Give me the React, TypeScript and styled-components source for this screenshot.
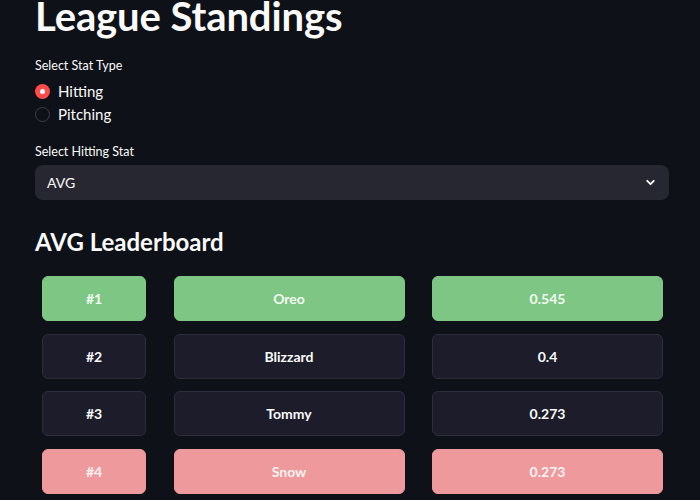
import React from "react"
import styled, { createGlobalStyle } from "styled-components"

const GlobalStyle = createGlobalStyle`
  html, body {
    margin: 0;
    padding: 0;
    background: #0e1117;
    color: #fafafa;
    font-family: Lato, "Noto Sans", sans-serif;
  }
`

const Page = styled.main`
  width: 700px;
  height: 500px;
  overflow: hidden;
  box-sizing: border-box;
  padding: 0 31px 0 35px;
`

const Title = styled.h1`
  margin: -8px 0 17px;
  font-size: 40px;
  font-weight: 700;
  line-height: 48px;
  letter-spacing: -0.1px;
`

const FieldLabel = styled.div<{ $gap: number }>`
  font-size: 12.5px;
  line-height: 18px;
  margin-bottom: ${p => p.$gap}px;
`

const RadioGroup = styled.div`
  display: flex;
  flex-direction: column;
  gap: 5px;
  margin-bottom: 20px;
`

const RadioRow = styled.label`
  display: flex;
  align-items: center;
  gap: 8px;
  font-size: 15px;
  line-height: 18px;
`

const RadioDot = styled.span<{ $checked?: boolean }>`
  box-sizing: border-box;
  width: 15px;
  height: 15px;
  border-radius: 50%;
  background: ${p => (p.$checked ? "#ff4b4b" : "transparent")};
  border: ${p => (p.$checked ? "none" : "1px solid #3d3f48")};
  display: flex;
  align-items: center;
  justify-content: center;
  &::after {
    content: "";
    display: ${p => (p.$checked ? "block" : "none")};
    width: 5px;
    height: 5px;
    border-radius: 50%;
    background: #fff;
  }
`

const Select = styled.div`
  height: 35px;
  border-radius: 8px;
  background: #262730;
  display: flex;
  align-items: center;
  justify-content: space-between;
  padding: 0 12px;
  font-size: 14px;
`

const SubTitle = styled.h2`
  margin: 26px 0 0;
  font-size: 24px;
  font-weight: 700;
  line-height: 32px;
`

const Board = styled.div`
  display: grid;
  grid-template-columns: 104px 231px 231px;
  column-gap: 27.5px;
  row-gap: 12.5px;
  padding-left: 7px;
  margin-top: 18px;
`

const tones = {
  top: { bg: "#7dc683", border: "#7dc683", color: "#f4fbf4" },
  bottom: { bg: "#ee9a9c", border: "#ee9a9c", color: "#fdf2f2" },
  mid: { bg: "#1c1c2b", border: "#2d2d3c", color: "#fafafa" },
}

type Tone = keyof typeof tones

const Cell = styled.div<{ $tone: Tone }>`
  box-sizing: border-box;
  height: 45px;
  border-radius: 6px;
  background: ${p => tones[p.$tone].bg};
  border: 1px solid ${p => tones[p.$tone].border};
  color: ${p => tones[p.$tone].color};
  display: flex;
  align-items: center;
  justify-content: center;
  font-size: 14px;
  font-weight: 700;
`

const rows = [
  { rank: 1, name: "Oreo", value: "0.545", tone: "top" as Tone },
  { rank: 2, name: "Blizzard", value: "0.4", tone: "mid" as Tone },
  { rank: 3, name: "Tommy", value: "0.273", tone: "mid" as Tone },
  { rank: 4, name: "Snow", value: "0.273", tone: "bottom" as Tone },
]

const Chevron = () => (
  <svg width="13" height="13" viewBox="0 0 24 24" fill="none" stroke="#fafafa" strokeWidth="3.5" strokeLinecap="round" strokeLinejoin="round">
    <path d="M6 9l6 6 6-6" />
  </svg>
)

export default function App() {
  return (
    <>
      <GlobalStyle />
      <Page>
        <Title>League Standings</Title>
        <FieldLabel $gap={7}>Select Stat Type</FieldLabel>
        <RadioGroup>
          <RadioRow>
            <RadioDot $checked />
            Hitting
          </RadioRow>
          <RadioRow>
            <RadioDot />
            Pitching
          </RadioRow>
        </RadioGroup>
        <FieldLabel $gap={4}>Select Hitting Stat</FieldLabel>
        <Select>
          <span>AVG</span>
          <Chevron />
        </Select>
        <SubTitle>AVG Leaderboard</SubTitle>
        <Board>
          {rows.map(r => (
            <React.Fragment key={r.rank}>
              <Cell $tone={r.tone}>#{r.rank}</Cell>
              <Cell $tone={r.tone}>{r.name}</Cell>
              <Cell $tone={r.tone}>{r.value}</Cell>
            </React.Fragment>
          ))}
        </Board>
      </Page>
    </>
  )
}
